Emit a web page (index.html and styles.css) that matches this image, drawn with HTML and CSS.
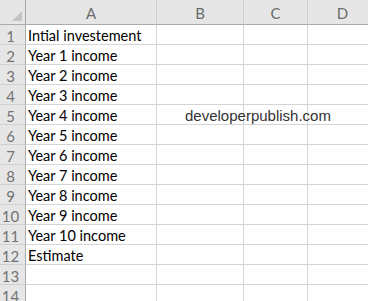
FILE: index.html
```html
<!DOCTYPE html>
<html lang="en">
<head>
    <meta charset="UTF-8">
    <meta name="viewport" content="width=device-width, initial-scale=1.0">
    <title>Sheet1</title>
    <link rel="stylesheet" href="styles.css">
</head>
<body>
    <div class="sheet">
        <div class="grid">
            <div class="hd corner"><span class="tri"></span></div>
            <div class="hd col">A</div>
            <div class="hd col">B</div>
            <div class="hd col">C</div>
            <div class="hd col">D</div>

            <div class="rn">1</div><div class="cell">Intial investement</div><div class="cell"></div><div class="cell"></div><div class="cell"></div>
            <div class="rn">2</div><div class="cell">Year 1 income</div><div class="cell"></div><div class="cell"></div><div class="cell"></div>
            <div class="rn">3</div><div class="cell">Year 2 income</div><div class="cell"></div><div class="cell"></div><div class="cell"></div>
            <div class="rn">4</div><div class="cell">Year 3 income</div><div class="cell"></div><div class="cell"></div><div class="cell"></div>
            <div class="rn">5</div><div class="cell">Year 4 income</div><div class="cell"></div><div class="cell"></div><div class="cell"></div>
            <div class="rn">6</div><div class="cell">Year 5 income</div><div class="cell"></div><div class="cell"></div><div class="cell"></div>
            <div class="rn">7</div><div class="cell">Year 6 income</div><div class="cell"></div><div class="cell"></div><div class="cell"></div>
            <div class="rn">8</div><div class="cell">Year 7 income</div><div class="cell"></div><div class="cell"></div><div class="cell"></div>
            <div class="rn">9</div><div class="cell">Year 8 income</div><div class="cell"></div><div class="cell"></div><div class="cell"></div>
            <div class="rn">10</div><div class="cell">Year 9 income</div><div class="cell"></div><div class="cell"></div><div class="cell"></div>
            <div class="rn">11</div><div class="cell">Year 10 income</div><div class="cell"></div><div class="cell"></div><div class="cell"></div>
            <div class="rn">12</div><div class="cell">Estimate</div><div class="cell"></div><div class="cell"></div><div class="cell"></div>
            <div class="rn">13</div><div class="cell"></div><div class="cell"></div><div class="cell"></div><div class="cell"></div>
            <div class="rn">14</div><div class="cell"></div><div class="cell"></div><div class="cell"></div><div class="cell"></div>
        </div>
        <!-- text box floating over the sheet -->
        <div class="watermark">developerpublish.com</div>
    </div>
</body>
</html>
```

FILE: styles.css
```css
body {
    margin: 0;
    background: #fff;
    overflow: hidden;
}
.sheet {
    position: relative;
    width: 368px;
    height: 301px;
    overflow: hidden;
}
.grid {
    display: grid;
    grid-template-columns: 26px 131px 87px 64px 70px;
    grid-template-rows: 25px repeat(14, 20px);
    font-family: Lato, "Noto Sans", sans-serif;
}
.hd {
    background: #e6e6e6;
    border-right: 1px solid #d0d0d0;
    border-bottom: 1px solid #ababab;
    color: #6b6b6b;
    font-size: 15px;
    display: flex;
    align-items: center;
    justify-content: center;
    padding-top: 1px;
}
.corner {
    position: relative;
    border-right-color: #ababab;
}
.tri {
    position: absolute;
    right: 3px;
    bottom: 3px;
    width: 0;
    height: 0;
    border-left: 10px solid transparent;
    border-bottom: 10px solid #c3c3c3;
}
.rn {
    background: #e6e6e6;
    border-right: 1px solid #ababab;
    border-bottom: 1px solid #d0d0d0;
    color: #737373;
    font-size: 15px;
    line-height: 19px;
    padding-top: 2px;
    padding-right: 4px;
    text-align: center;
}
.cell {
    border-right: 1px solid #d4d4d4;
    border-bottom: 1px solid #d4d4d4;
    font-size: 14.5px;
    color: #000;
    padding-left: 2px;
    padding-top: 2px;
    line-height: 17px;
    white-space: nowrap;
}
.watermark {
    position: absolute;
    left: 185px;
    top: 107px;
    font-family: "Liberation Sans", Arial, sans-serif;
    font-size: 15px;
    color: #333;
}
```
